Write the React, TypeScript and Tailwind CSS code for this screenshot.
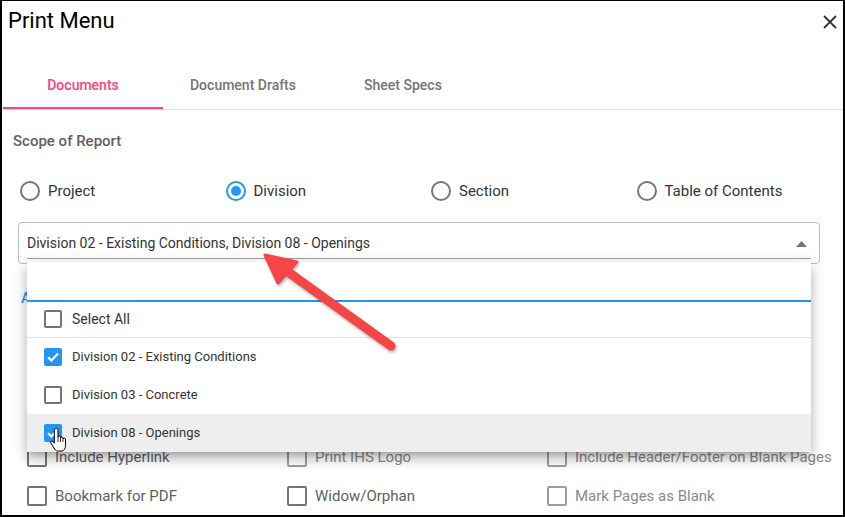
import React from "react";

function Radio({ checked, label }: { checked?: boolean; label: string }) {
  return (
    <div className="flex items-center h-[24px]">
      <div
        className={
          checked
            ? "w-[20px] h-[20px] shrink-0 rounded-full border-2 border-[#2196f3] flex items-center justify-center"
            : "w-[20px] h-[20px] shrink-0 rounded-full border-2 border-[#757575]"
        }
      >
        {checked && <div className="w-[10px] h-[10px] rounded-full bg-[#2196f3]" />}
      </div>
      <span className="ml-[8px] text-[15px] leading-[20px] text-[#333333]">{label}</span>
    </div>
  );
}

function MenuCheck({ checked }: { checked?: boolean }) {
  if (checked) {
    return (
      <div className="w-[18px] h-[18px] shrink-0 rounded-[2px] bg-[#2196f3] flex items-center justify-center">
        <svg width="18" height="18" viewBox="0 0 18 18">
          <path d="M4 9.2 L7.4 12.4 L14 5.6" fill="none" stroke="#fff" strokeWidth="2.2" />
        </svg>
      </div>
    );
  }
  return <div className="w-[18px] h-[18px] shrink-0 rounded-[2px] border-2 border-[#757575]" />;
}

function BgCheck({ label, disabled }: { label: string; disabled?: boolean }) {
  return (
    <div className="flex items-center">
      <div
        className={
          disabled
            ? "w-[20px] h-[20px] shrink-0 rounded-[2px] border-2 border-[#9e9e9e]"
            : "w-[20px] h-[20px] shrink-0 rounded-[2px] border-2 border-[#757575]"
        }
      />
      <span
        className={
          disabled
            ? "ml-[8px] text-[15px] leading-[20px] text-[#8a8a8a] whitespace-nowrap"
            : "ml-[8px] text-[15px] leading-[20px] text-[#5f5f5f] whitespace-nowrap"
        }
      >
        {label}
      </span>
    </div>
  );
}

export default function App() {
  const rows: [string, string, string][] = [
    ["Include Hyperlink", "Print IHS Logo", "Include Header/Footer on Blank Pages"],
    ["Bookmark for PDF", "Widow/Orphan", "Mark Pages as Blank"],
  ];
  return (
    <div className="w-[845px] h-[517px] relative overflow-hidden bg-white border-black border-t border-x-2 border-b-2 font-['Roboto',sans-serif]">
      {/* Header */}
      <div className="flex justify-between pt-[6px] pl-[6px] pr-[6px]">
        <div className="text-[22px] leading-[28px] text-black">Print Menu</div>
        <svg className="mt-[8px]" width="14" height="14" viewBox="0 0 14 14">
          <path d="M1 1 L13 13 M13 1 L1 13" stroke="#333" strokeWidth="1.8" />
        </svg>
      </div>

      {/* Tabs */}
      <div className="mt-[26px] flex border-b border-[#e0e0e0] pl-[1px]">
        <div className="w-[160px] h-[48px] pt-[2px] flex items-center justify-center text-[14px] font-medium text-[#ff4081] border-b-2 border-[#ff4081]">
          Documents
        </div>
        <div className="w-[160px] h-[48px] pt-[2px] flex items-center justify-center text-[14px] font-medium text-[#757575] border-b-2 border-transparent">
          Document Drafts
        </div>
        <div className="w-[160px] h-[48px] pt-[2px] flex items-center justify-center text-[14px] font-medium text-[#757575] border-b-2 border-transparent">
          Sheet Specs
        </div>
      </div>

      {/* Scope */}
      <div className="mt-[21px] ml-[11px] text-[15px] leading-[20px] font-medium text-[#616161]">
        Scope of Report
      </div>

      <div className="mt-[28px] ml-[18px] grid grid-cols-4 w-[822px]">
        <Radio label="Project" />
        <Radio label="Division" checked />
        <Radio label="Section" />
        <Radio label="Table of Contents" />
      </div>

      {/* Select */}
      <div className="mt-[19px] ml-[16px] w-[802px] h-[42px] border border-[#bdbdbd] rounded-[4px]">
        <div className="mx-[8px] mt-[10px] h-[26px] border-b border-[#9e9e9e] flex justify-between">
          <span className="text-[14px] leading-[20px] text-[#333333]">
            Division 02 - Existing Conditions, Division 08 - Openings
          </span>
          <svg className="mr-[4px] mt-[8px]" width="11" height="6" viewBox="0 0 11 6">
            <path d="M0 6 L5.5 0 L11 6 Z" fill="#757575" />
          </svg>
        </div>
      </div>

      {/* Additional options (mostly behind dropdown) */}
      <div className="mt-[24px] ml-[19px] text-[14px] leading-[20px] font-medium text-[#2196f3]">A</div>
      <div className="h-[129px]" />
      <div className="ml-[25px] w-[780px]">
        {rows.map((r, i) => (
          <div key={i} className="grid grid-cols-[260px_260px_260px] h-[39px] items-center">
            <BgCheck label={r[0]} />
            <BgCheck label={r[1]} disabled={i === 0} />
            <BgCheck label={r[2]} disabled />
          </div>
        ))}
      </div>

      {/* Dropdown menu overlay */}
      <div className="absolute left-[25px] top-[261px] w-[784px] h-[190px] bg-white shadow-[0_5px_5px_-3px_rgba(0,0,0,0.2),0_8px_10px_1px_rgba(0,0,0,0.14),0_3px_14px_2px_rgba(0,0,0,0.12)] flex flex-col">
        <div className="h-[40px] border-b-2 border-[#2196f3]" />
        <div className="h-[36px] border-b border-[#e0e0e0] flex items-center pl-[17px] pb-[2px]">
          <MenuCheck />
          <span className="ml-[10px] text-[14px] leading-[20px] text-[#333333]">Select All</span>
        </div>
        <div className="h-[38px] flex items-center pl-[17px]">
          <MenuCheck checked />
          <span className="ml-[10px] text-[13px] leading-[18px] text-[#333333]">
            Division 02 - Existing Conditions
          </span>
        </div>
        <div className="h-[38px] flex items-center pl-[17px]">
          <MenuCheck />
          <span className="ml-[10px] text-[13px] leading-[18px] text-[#333333]">Division 03 - Concrete</span>
        </div>
        <div className="h-[38px] flex items-center pl-[17px] bg-[#eeeeee]">
          <MenuCheck checked />
          <span className="ml-[10px] text-[13px] leading-[18px] text-[#333333]">Division 08 - Openings</span>
        </div>
      </div>

      {/* Hand cursor */}
      <svg className="absolute left-[47px] top-[426px]" width="19" height="26" viewBox="0 0 19 26">
        <path
          d="M6.5 1.5 C7.8 1 9 1.6 9 2.8 L9 10 C9 8.6 11.5 8.6 11.5 10 L11.5 11 C11.5 9.8 14 9.8 14 11 L14 12 C14 10.9 16.5 10.9 16.5 12.2 L16.5 18.5 C16.5 21.5 15 24 13 24 L8.6 24 C7 24 6 22.5 5 21 L1.8 16 C1 14.7 2.6 13.4 3.9 14.4 L5.3 16.2 L5.3 3 C5.3 2.2 5.8 1.7 6.5 1.5 Z"
          fill="#fff"
          stroke="#000"
          strokeWidth="1"
          strokeLinejoin="round"
        />
        <path d="M9 10 L9 15 M11.5 11 L11.5 15 M14 12 L14 15" stroke="#000" strokeWidth="0.8" />
      </svg>

      {/* Red annotation arrow */}
      <svg
        className="absolute left-[-2px] top-[-1px] pointer-events-none"
        width="845"
        height="517"
        viewBox="0 0 845 517"
        style={{ filter: "drop-shadow(1px 2px 1.5px rgba(0,0,0,0.3))" }}
      >
        <line x1="391" y1="346" x2="284" y2="269" stroke="#f44646" strokeWidth="9" strokeLinecap="round" />
        <path d="M265 255 L297 262 L278 283 Z" fill="#f44646" stroke="#f44646" strokeWidth="3" strokeLinejoin="round" />
      </svg>
    </div>
  );
}
